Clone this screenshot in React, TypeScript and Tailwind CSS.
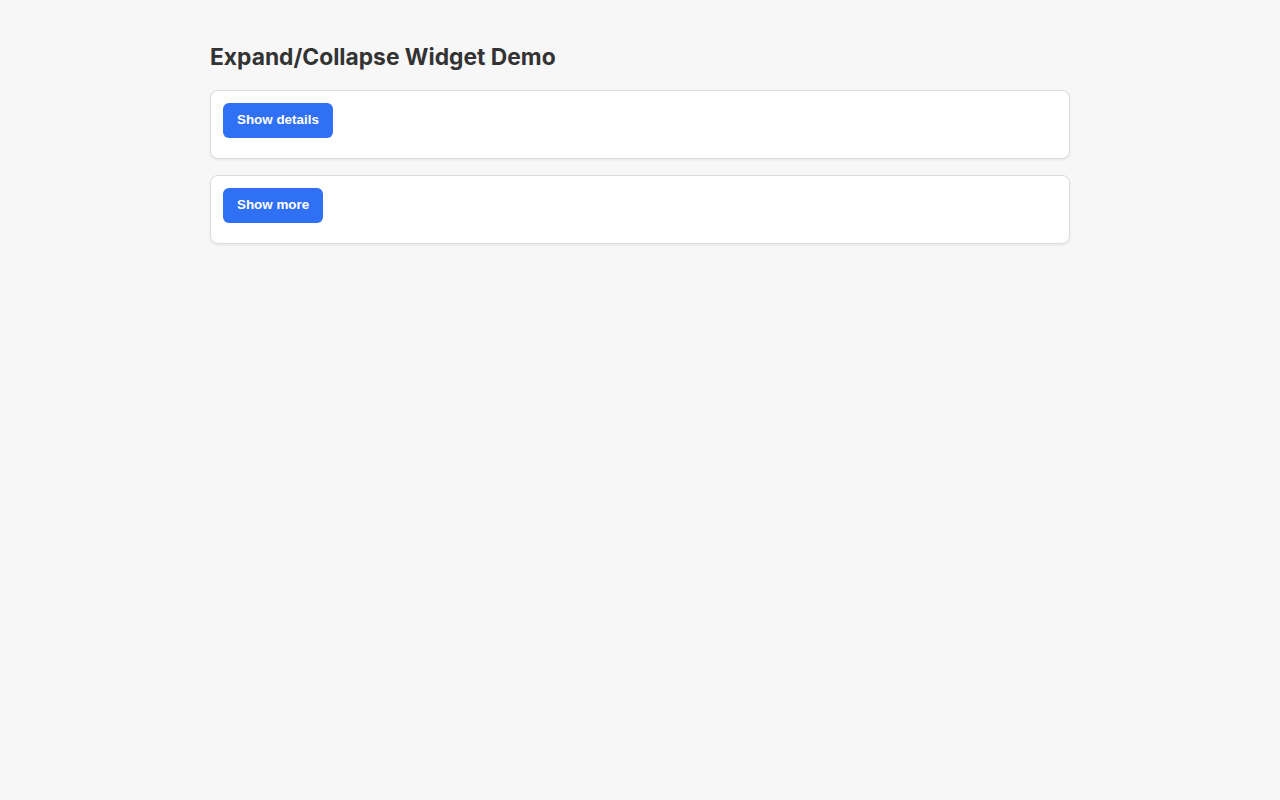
import { useState } from "react";

const items = [
  { label: "Show details", body: "Here are the details." },
  { label: "Show more", body: "Here is more content." },
];

function Panel({ label, body }: { label: string; body: string }) {
  const [open, setOpen] = useState(false);
  return (
    <div className="bg-white border border-[#dddddd] rounded-lg shadow-[0_1px_3px_rgba(0,0,0,0.08)] px-3 pt-3 pb-5">
      <button
        onClick={() => setOpen(!open)}
        className="h-[35px] px-[14px] rounded-md bg-[#3070f5] text-white text-[13.4px] font-bold font-['Liberation_Sans',Arial,sans-serif]"
      >
        {label}
      </button>
      {open && <div className="mt-3 text-sm text-[#333]">{body}</div>}
    </div>
  );
}

export default function App() {
  return (
    <div className="min-h-screen bg-[#f7f7f7] font-['Inter',sans-serif] text-[#333333]">
      <div className="max-w-[860px] mx-auto pt-[42px]">
        <h1 className="text-[22.8px] font-bold leading-[30px] mb-[18px]">Expand/Collapse Widget Demo</h1>
        <div className="flex flex-col gap-4">
          {items.map((it) => (
            <Panel key={it.label} {...it} />
          ))}
        </div>
      </div>
    </div>
  );
}
